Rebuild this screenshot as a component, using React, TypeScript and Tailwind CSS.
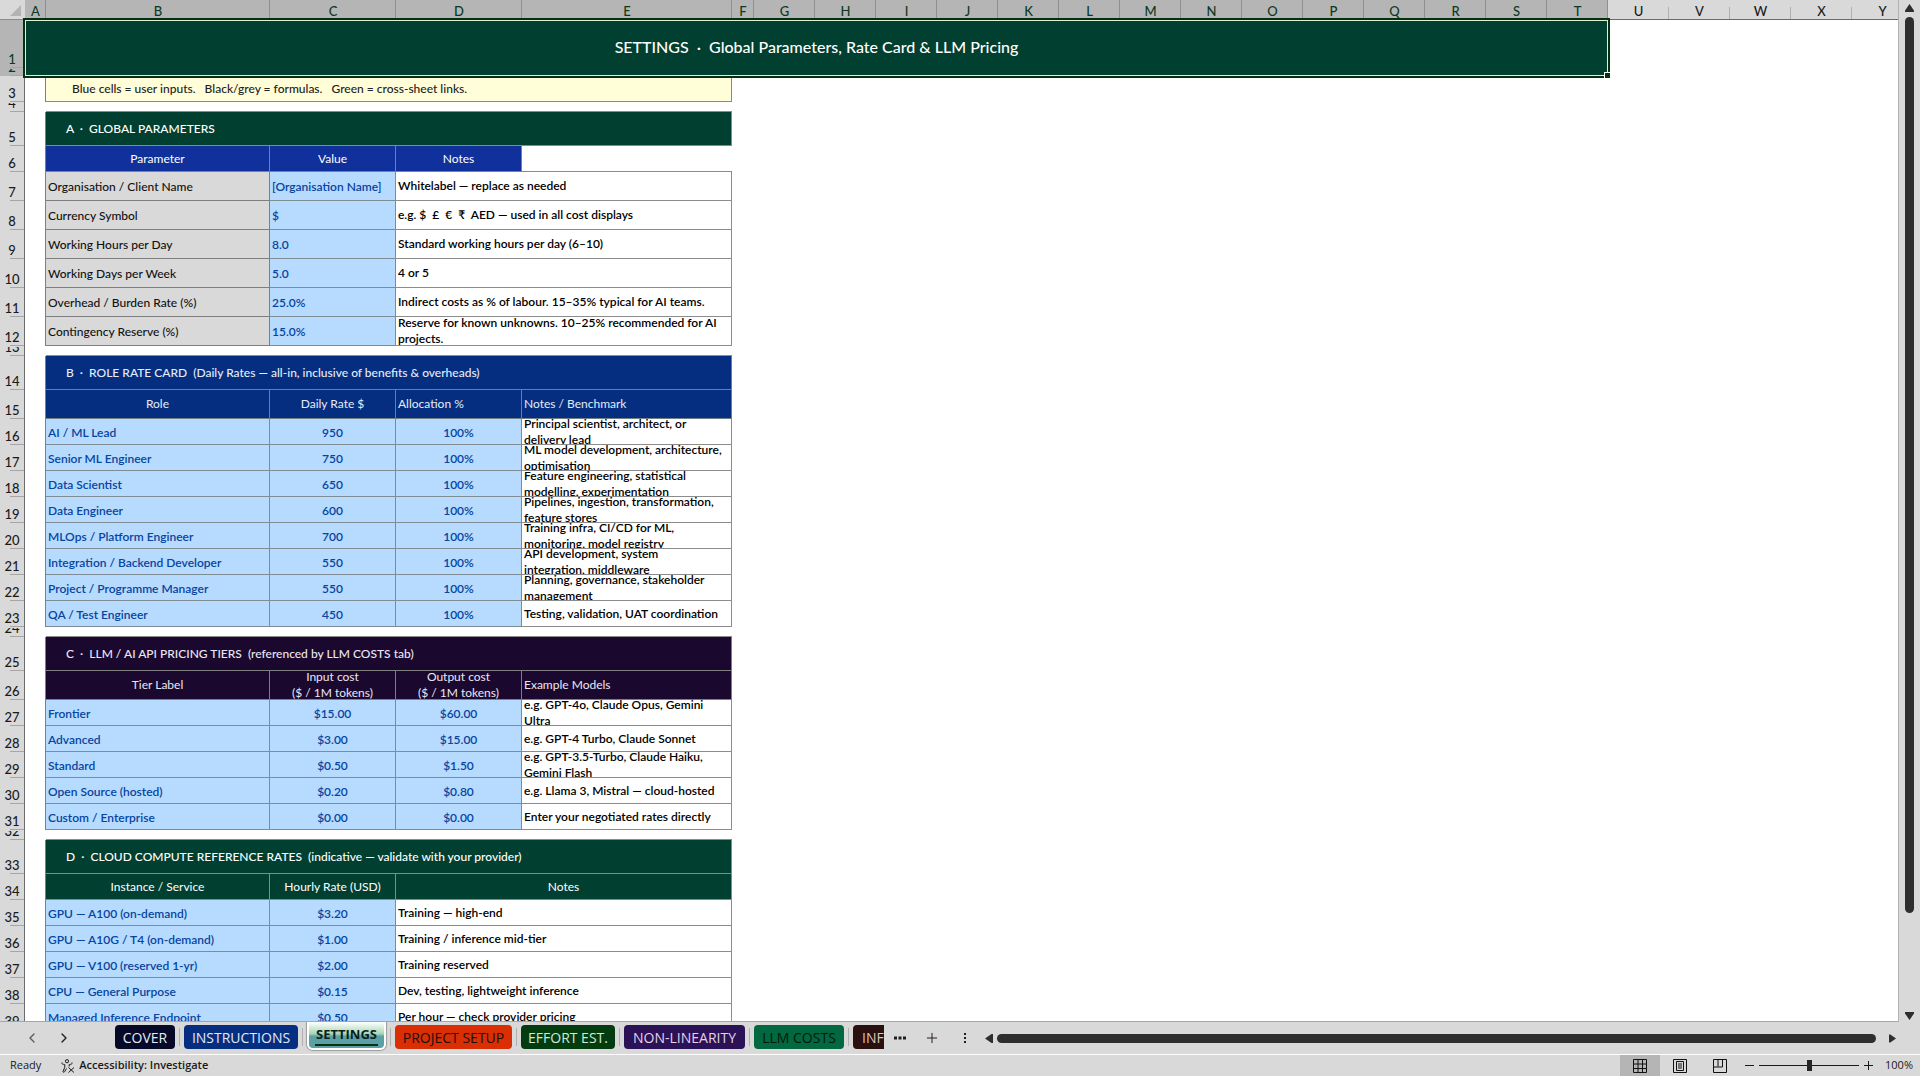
import type { ReactNode } from 'react';
import { ChevronLeft, ChevronRight, Plus } from 'lucide-react';

type Size = 'gap' | 'section' | 'tall' | 'base';
type Tone = 'green' | 'blue' | 'navy' | 'purple' | 'label' | 'input' | 'note' | 'hint' | 'blank';

interface Cell {
  text?: string;
  span?: number;
  tone: Tone;
  center?: boolean;
}

interface Row {
  n: number;
  size: Size;
  cells: Cell[];
}

const COLUMNS = [
  { name: 'A', width: 'w-[21px]' },
  { name: 'B', width: 'w-[224px]' },
  { name: 'C', width: 'w-[126px]' },
  { name: 'D', width: 'w-[126px]' },
  { name: 'E', width: 'w-[210px]' },
  { name: 'F', width: 'w-[22px]' },
  ...'GHIJKLMNOPQRSTUVWXY'.split('').map((name) => ({ name, width: 'w-[61px]' })),
];

const SELECTED_COLUMNS = 20;

const SIZES: Record<Size, { row: string; box: string }> = {
  gap: { row: 'h-[10px]', box: 'h-[9px]' },
  section: { row: 'h-[34px]', box: 'h-[33px]' },
  tall: { row: 'h-[29px]', box: 'h-[28px]' },
  base: { row: 'h-[26px]', box: 'h-[25px]' },
};

const TONES: Record<Tone, string> = {
  green: 'bg-[#014030] text-white border-[#7f8f88]',
  blue: 'bg-[#10309b] text-white border-[#7f7f7f]',
  navy: 'bg-[#062e80] text-[#e4ecf8] border-[#6f7f86]',
  purple: 'bg-[#1a082e] text-[#ece6f2] border-[#7f7f7f]',
  label: 'bg-[#d9d9d9] text-[#111] border-[#7f7f7f]',
  input: 'bg-[#b7daff] text-[#0645a0] border-[#7f8c94]',
  note: 'bg-white text-black border-[#8c8c8c]',
  hint: 'bg-[#fffed9] text-[#222] border-[#8c8c7c]',
  blank: 'bg-white border-[#8c8c8c]',
};

function section(n: number, tone: Tone, text: string): Row {
  return { n, size: 'section', cells: [{ text, span: 4, tone }] };
}

function gap(n: number): Row {
  return { n, size: 'gap', cells: [{ span: 4, tone: 'blank' }] };
}

function parameter(n: number, name: string, value: string, note: string): Row {
  return {
    n,
    size: 'tall',
    cells: [
      { text: name, tone: 'label' },
      { text: value, tone: 'input' },
      { text: note, tone: 'note', span: 2 },
    ],
  };
}

function rate(n: number, name: string, first: string, second: string, note: string): Row {
  return {
    n,
    size: 'base',
    cells: [
      { text: name, tone: 'input' },
      { text: first, tone: 'input', center: true },
      { text: second, tone: 'input', center: true },
      { text: note, tone: 'note' },
    ],
  };
}

function compute(n: number, name: string, hourly: string, note: string): Row {
  return {
    n,
    size: 'base',
    cells: [
      { text: name, tone: 'input' },
      { text: hourly, tone: 'input', center: true },
      { text: note, tone: 'note', span: 2 },
    ],
  };
}

const ROWS: Row[] = [
  {
    n: 3,
    size: 'base',
    cells: [{ text: 'Blue cells = user inputs.   Black/grey = formulas.   Green = cross-sheet links.', span: 4, tone: 'hint' }],
  },
  gap(4),
  section(5, 'green', 'A  ·  GLOBAL PARAMETERS'),
  {
    n: 6,
    size: 'base',
    cells: [
      { text: 'Parameter', tone: 'blue', center: true },
      { text: 'Value', tone: 'blue', center: true },
      { text: 'Notes', tone: 'blue', center: true },
      { tone: 'blank' },
    ],
  },
  parameter(7, 'Organisation / Client Name', '[Organisation Name]', 'Whitelabel — replace as needed'),
  parameter(8, 'Currency Symbol', '$', 'e.g. $  £  €  ₹  AED — used in all cost displays'),
  parameter(9, 'Working Hours per Day', '8.0', 'Standard working hours per day (6–10)'),
  parameter(10, 'Working Days per Week', '5.0', '4 or 5'),
  parameter(11, 'Overhead / Burden Rate (%)', '25.0%', 'Indirect costs as % of labour. 15–35% typical for AI teams.'),
  parameter(12, 'Contingency Reserve (%)', '15.0%', 'Reserve for known unknowns. 10–25% recommended for AI\nprojects.'),
  gap(13),
  section(14, 'navy', 'B  ·  ROLE RATE CARD  (Daily Rates — all-in, inclusive of benefits & overheads)'),
  {
    n: 15,
    size: 'tall',
    cells: [
      { text: 'Role', tone: 'navy', center: true },
      { text: 'Daily Rate $', tone: 'navy', center: true },
      { text: 'Allocation %', tone: 'navy' },
      { text: 'Notes / Benchmark', tone: 'navy' },
    ],
  },
  rate(16, 'AI / ML Lead', '950', '100%', 'Principal scientist, architect, or\ndelivery lead'),
  rate(17, 'Senior ML Engineer', '750', '100%', 'ML model development, architecture,\noptimisation'),
  rate(18, 'Data Scientist', '650', '100%', 'Feature engineering, statistical\nmodelling, experimentation'),
  rate(19, 'Data Engineer', '600', '100%', 'Pipelines, ingestion, transformation,\nfeature stores'),
  rate(20, 'MLOps / Platform Engineer', '700', '100%', 'Training infra, CI/CD for ML,\nmonitoring, model registry'),
  rate(21, 'Integration / Backend Developer', '550', '100%', 'API development, system\nintegration, middleware'),
  rate(22, 'Project / Programme Manager', '550', '100%', 'Planning, governance, stakeholder\nmanagement'),
  rate(23, 'QA / Test Engineer', '450', '100%', 'Testing, validation, UAT coordination'),
  gap(24),
  section(25, 'purple', 'C  ·  LLM / AI API PRICING TIERS  (referenced by LLM COSTS tab)'),
  {
    n: 26,
    size: 'tall',
    cells: [
      { text: 'Tier Label', tone: 'purple', center: true },
      { text: 'Input cost\n($ / 1M tokens)', tone: 'purple', center: true },
      { text: 'Output cost\n($ / 1M tokens)', tone: 'purple', center: true },
      { text: 'Example Models', tone: 'purple' },
    ],
  },
  rate(27, 'Frontier', '$15.00', '$60.00', 'e.g. GPT-4o, Claude Opus, Gemini\nUltra'),
  rate(28, 'Advanced', '$3.00', '$15.00', 'e.g. GPT-4 Turbo, Claude Sonnet'),
  rate(29, 'Standard', '$0.50', '$1.50', 'e.g. GPT-3.5-Turbo, Claude Haiku,\nGemini Flash'),
  rate(30, 'Open Source (hosted)', '$0.20', '$0.80', 'e.g. Llama 3, Mistral — cloud-hosted'),
  rate(31, 'Custom / Enterprise', '$0.00', '$0.00', 'Enter your negotiated rates directly'),
  gap(32),
  section(33, 'green', 'D  ·  CLOUD COMPUTE REFERENCE RATES  (indicative — validate with your provider)'),
  {
    n: 34,
    size: 'base',
    cells: [
      { text: 'Instance / Service', tone: 'green', center: true },
      { text: 'Hourly Rate (USD)', tone: 'green', center: true },
      { text: 'Notes', tone: 'green', center: true, span: 2 },
    ],
  },
  compute(35, 'GPU — A100 (on-demand)', '$3.20', 'Training — high-end'),
  compute(36, 'GPU — A10G / T4 (on-demand)', '$1.00', 'Training / inference mid-tier'),
  compute(37, 'GPU — V100 (reserved 1-yr)', '$2.00', 'Training reserved'),
  compute(38, 'CPU — General Purpose', '$0.15', 'Dev, testing, lightweight inference'),
  compute(39, 'Managed Inference Endpoint', '$0.50', 'Per hour — check provider pricing'),
];

const TABS = [
  { name: 'COVER', style: 'w-[60px] bg-[#060a28] text-[#e6eaf5]' },
  { name: 'INSTRUCTIONS', style: 'w-[114px] bg-[#062e80] text-[#e0eaf8]' },
  { name: 'SETTINGS', style: '' },
  { name: 'PROJECT SETUP', style: 'w-[117px] bg-[#da2f04] text-[#1c0d08] font-medium' },
  { name: 'EFFORT EST.', style: 'w-[94px] bg-[#033c0f] text-[#cfeadb]' },
  { name: 'NON-LINEARITY', style: 'w-[121px] bg-[#2b1155] text-[#e2d2ea]' },
  { name: 'LLM COSTS', style: 'w-[90px] bg-[#02683f] text-[#04170e] font-medium' },
];

function RowNumber({ n, box, selected }: { n: number; box: string; selected?: boolean }) {
  return (
    <th
      scope="row"
      className={`relative border-r border-[#6b6b6b] p-0 font-normal after:absolute after:right-0 after:bottom-0 after:h-px after:w-[14px] after:bg-[#a6a6a6] ${
        selected ? 'bg-[#b5b5b5] text-[#0b3a20]' : 'bg-[#d9d9d9] text-[#1a1a1a]'
      }`}
    >
      <div className={`flex items-end justify-center overflow-hidden text-[13px] leading-[18px] font-medium ${box}`}>
        <span>{n}</span>
      </div>
    </th>
  );
}

function padding(cell: Cell, size: Size) {
  if (cell.center) return 'justify-center text-center';
  if (cell.tone === 'hint') return 'pl-[26px]';
  if (size === 'section') return 'pl-5';
  return 'pl-[2px]';
}

function textStyle(cell: Cell, size: Size) {
  if (cell.tone === 'note') return 'font-semibold';
  if (cell.tone === 'input') return 'pt-[2px] font-semibold';
  if (cell.tone === 'label') return 'pt-[2px] font-medium';
  if (cell.tone === 'hint' || size === 'section') return 'font-medium';
  return 'font-normal';
}

function SheetRow({ row }: { row: Row }) {
  const size = SIZES[row.size];
  const isGap = row.size === 'gap';

  return (
    <tr className={size.row}>
      <RowNumber n={row.n} box={size.box} />
      <td className={`p-0 ${isGap ? '' : 'border-r border-[#7f7f7f]'}`} />
      {row.cells.map((cell, index) => (
        <td
          key={index}
          colSpan={cell.span ?? 1}
          className={`border-b p-0 ${cell.tone === 'blank' ? '' : 'border-r'} ${TONES[cell.tone]}`}
        >
          <div
            className={`flex items-center overflow-hidden text-[12px] leading-4 whitespace-pre ${size.box} ${padding(cell, row.size)} ${textStyle(cell, row.size)}`}
          >
            {cell.text}
          </div>
        </td>
      ))}
      <td colSpan={20} className="p-0" />
    </tr>
  );
}

function Sheet() {
  return (
    <table className="w-[1913px] table-fixed border-separate border-spacing-0">
      <colgroup>
        <col className="w-[25px]" />
        {COLUMNS.map((column) => (
          <col key={column.name} className={column.width} />
        ))}
      </colgroup>
      <thead>
        <tr className="h-5">
          <th className="border-b border-[#8c8c8c] bg-[#d9d9d9] p-0">
            <svg viewBox="0 0 25 19" className="h-[19px] w-[25px] fill-[#b3b3b3]">
              <path d="M21 5v11H10z" />
            </svg>
          </th>
          {COLUMNS.map((column, index) => (
            <th
              key={column.name}
              scope="col"
              className={`relative border-b border-[#6b6b6b] p-0 text-center text-[13px] font-medium after:absolute after:right-0 after:bottom-0 after:w-px ${
                index < SELECTED_COLUMNS
                  ? 'bg-[#b5b5b5] text-[#0b3a20] after:h-full after:bg-[#8f8f8f]'
                  : 'bg-[#d9d9d9] text-[#1a1a1a] after:h-3 after:bg-[#b0b0b0]'
              }`}
            >
              <div className="h-[19px] leading-[22px]">{column.name}</div>
            </th>
          ))}
        </tr>
      </thead>
      <tbody>
        <tr className="h-12">
          <RowNumber n={1} box="h-[47px]" selected />
          <td rowSpan={2} colSpan={SELECTED_COLUMNS} className="relative bg-[#014030] p-0 pb-[2px] text-center text-[16px] leading-5 font-medium whitespace-pre text-white">
            SETTINGS  ·  Global Parameters, Rate Card &amp; LLM Pricing
            <div className="absolute -inset-[2px] z-10 border-2 border-[#03300f]">
              <div className="h-full border border-[#dff0d8]" />
              <div className="absolute -right-[3px] -bottom-[3px] size-[7px] border border-white bg-[#03300f]" />
            </div>
          </td>
          <td colSpan={5} className="p-0" />
        </tr>
        <tr className="h-2">
          <RowNumber n={2} box="h-[7px]" selected />
          <td colSpan={5} className="p-0" />
        </tr>
        {ROWS.map((row) => (
          <SheetRow key={row.n} row={row} />
        ))}
      </tbody>
    </table>
  );
}

function VerticalScroll() {
  return (
    <div className="flex w-[22px] flex-col items-center border-l border-[#b3b3b3] bg-[#d9d9d9] pt-1 pb-[2px]">
      <button type="button" aria-label="Scroll up">
        <svg viewBox="0 0 9 8" className="h-2 w-[9px] fill-[#2e2e2e]"><path d="M4.500 0 9 6.500V8H0V6.500z" /></svg>
      </button>
      <div className="mt-[5px] w-[9px] flex-1">
        <div className="h-[90%] rounded-full bg-[#2e2e2e]" />
      </div>
      <button type="button" aria-label="Scroll down">
        <svg viewBox="0 0 9 8" className="h-2 w-[9px] fill-[#2e2e2e]"><path d="M4.500 8 9 1.500V0H0v1.500z" /></svg>
      </button>
    </div>
  );
}

function TabBar() {
  return (
    <div className="relative flex h-8 shrink-0 items-center bg-[#d9d9d9] pr-6">
      <div className="flex w-[115px] shrink-0 gap-4 pl-6">
        <button type="button" aria-label="Previous sheet"><ChevronLeft className="size-4 text-[#5c5c5c]" /></button>
        <button type="button" aria-label="Next sheet"><ChevronRight className="size-4 text-[#1f1f1f]" /></button>
      </div>
      <nav className="flex h-full w-[769px] shrink-0 overflow-hidden font-['Open_Sans',sans-serif] text-[14px]">
        {TABS.map((tab) => (
          <div key={tab.name} className="flex shrink-0">
            {tab.name === 'SETTINGS' ? (
              <button
                type="button"
                className="h-7 w-[79px] rounded-b-md border-2 border-t-0 border-white bg-linear-to-b from-white via-[#a9d6b4] via-45% to-[#5aa0a4] to-55% px-[6px] text-[13px] font-bold text-[#0b1f1c] shadow-[0_0_1px_1px_#9c9c9c]"
              >
                <span className="block border-b-2 border-[#03300f] leading-5">{tab.name}</span>
              </button>
            ) : (
              <button type="button" className={`mt-[3px] h-6 rounded ${tab.style}`}>{tab.name}</button>
            )}
            <span className="mx-1 mt-[6px] h-[18px] w-px bg-[#b0b0b0]" />
          </div>
        ))}
        <button type="button" className="mt-[3px] h-6 w-20 shrink-0 rounded bg-[#2a100e] pl-[9px] text-left text-[#d9c4c0]">INFRA</button>
      </nav>
      <div className="flex w-[101px] shrink-0 items-center">
        <button type="button" aria-label="More sheets" className="ml-[10px]">
          <svg viewBox="0 0 12 4" className="h-1 w-3 fill-[#1f1f1f]"><path d="M0 .5h3v3H0zM4.500 .5h3v3h-3zM9 .5h3v3H9z" /></svg>
        </button>
        <button type="button" aria-label="New sheet" className="ml-[18px]"><Plus className="size-4 text-[#2a1f2a]" strokeWidth={1.500} /></button>
        <button type="button" aria-label="Resize tab bar" className="ml-6">
          <svg viewBox="0 0 2 10" className="h-[10px] w-[2px] fill-[#1f1f1f]"><path d="M0 0h2v2H0zM0 4h2v2H0zM0 8h2v2H0z" /></svg>
        </button>
      </div>
      <button type="button" aria-label="Scroll left">
        <svg viewBox="0 0 8 9" className="h-[9px] w-2 fill-[#2e2e2e]"><path d="M0 4.500 6.500 0H8v9H6.500z" /></svg>
      </button>
      <div className="mr-[13px] ml-1 h-[9px] flex-1 rounded-full bg-[#2e2e2e]" />
      <button type="button" aria-label="Scroll right">
        <svg viewBox="0 0 8 9" className="h-[9px] w-[7px] fill-[#2e2e2e]"><path d="M8 4.500 1.500 0H0v9h1.500z" /></svg>
      </button>
    </div>
  );
}

function ViewButton({ label, active, children }: { label: string; active?: boolean; children: ReactNode }) {
  return (
    <button type="button" aria-label={label} className={`flex h-full w-10 items-center justify-center ${active ? 'bg-[#b5b5b5]' : ''}`}>
      <svg viewBox="0 0 14 14" className="size-[14px] fill-none stroke-[#111]">{children}</svg>
    </button>
  );
}

function StatusBar() {
  return (
    <footer className="flex h-[22px] shrink-0 items-center border-t border-white bg-[#d9d9d9] font-['Open_Sans',sans-serif] text-[11px] text-[#1a1a1a]">
      <span className="ml-[10px]">Ready</span>
      <button type="button" className="ml-5 flex items-center gap-1 font-semibold">
        <svg viewBox="0 0 14 14" className="size-[14px] fill-none stroke-[#1a1a1a]">
          <circle cx="6" cy="2.200" r="1.600" />
          <path d="M1 3.500c-.8 1 .2 1.600 2.800 2.200v2.500L2 12.500c0 1 1.200 1 1.600.2L5.500 9.500M11 3.500c.8 1-.2 1.600-2.800 2.200V7.500M7.500 8.500l5.500 5M13 8.500l-5.500 5" />
        </svg>
        Accessibility: Investigate
      </button>
      <div className="ml-auto flex h-full items-center">
        <ViewButton label="Normal" active>
          <path d="M.5.5h13v13H.5zM5 .5v13M9.500 .5v13M.5 5h13M.5 9.500h13" />
        </ViewButton>
        <ViewButton label="Page layout">
          <path d="M.5.5h13v13H.5zM3.500 2.500h7v9h-7zM5 5h4M5 7h4M5 9h4" />
        </ViewButton>
        <ViewButton label="Page break preview">
          <path d="M.5.5h13v13H.5zM5 .5v7M9.500 .5v7.500H.5" />
        </ViewButton>
        <button type="button" aria-label="Zoom out" className="ml-[5px]">
          <svg viewBox="0 0 9 9" className="size-[9px] stroke-[#1a1a1a]"><path d="M0 4.500h9" /></svg>
        </button>
        <input
          type="range"
          aria-label="Zoom"
          min={10}
          max={190}
          defaultValue={100}
          className="mx-[5px] h-px w-[100px] appearance-none bg-[#1a1a1a] [&::-webkit-slider-thumb]:h-[11px] [&::-webkit-slider-thumb]:w-[5px] [&::-webkit-slider-thumb]:appearance-none [&::-webkit-slider-thumb]:bg-[#262626]"
        />
        <button type="button" aria-label="Zoom in">
          <svg viewBox="0 0 9 9" className="size-[9px] stroke-[#1a1a1a]"><path d="M0 4.500h9M4.500 0v9" /></svg>
        </button>
        <span className="w-[47px] pr-[7px] text-right">100%</span>
      </div>
    </footer>
  );
}

export default function App() {
  return (
    <div className="flex h-screen flex-col overflow-hidden bg-[#d9d9d9] font-['Lato',sans-serif]">
      <div className="flex min-h-0 flex-1">
        <main className="min-w-0 flex-1 overflow-hidden border-b border-[#a6a6a6] bg-white">
          <Sheet />
        </main>
        <VerticalScroll />
      </div>
      <TabBar />
      <StatusBar />
    </div>
  );
}
